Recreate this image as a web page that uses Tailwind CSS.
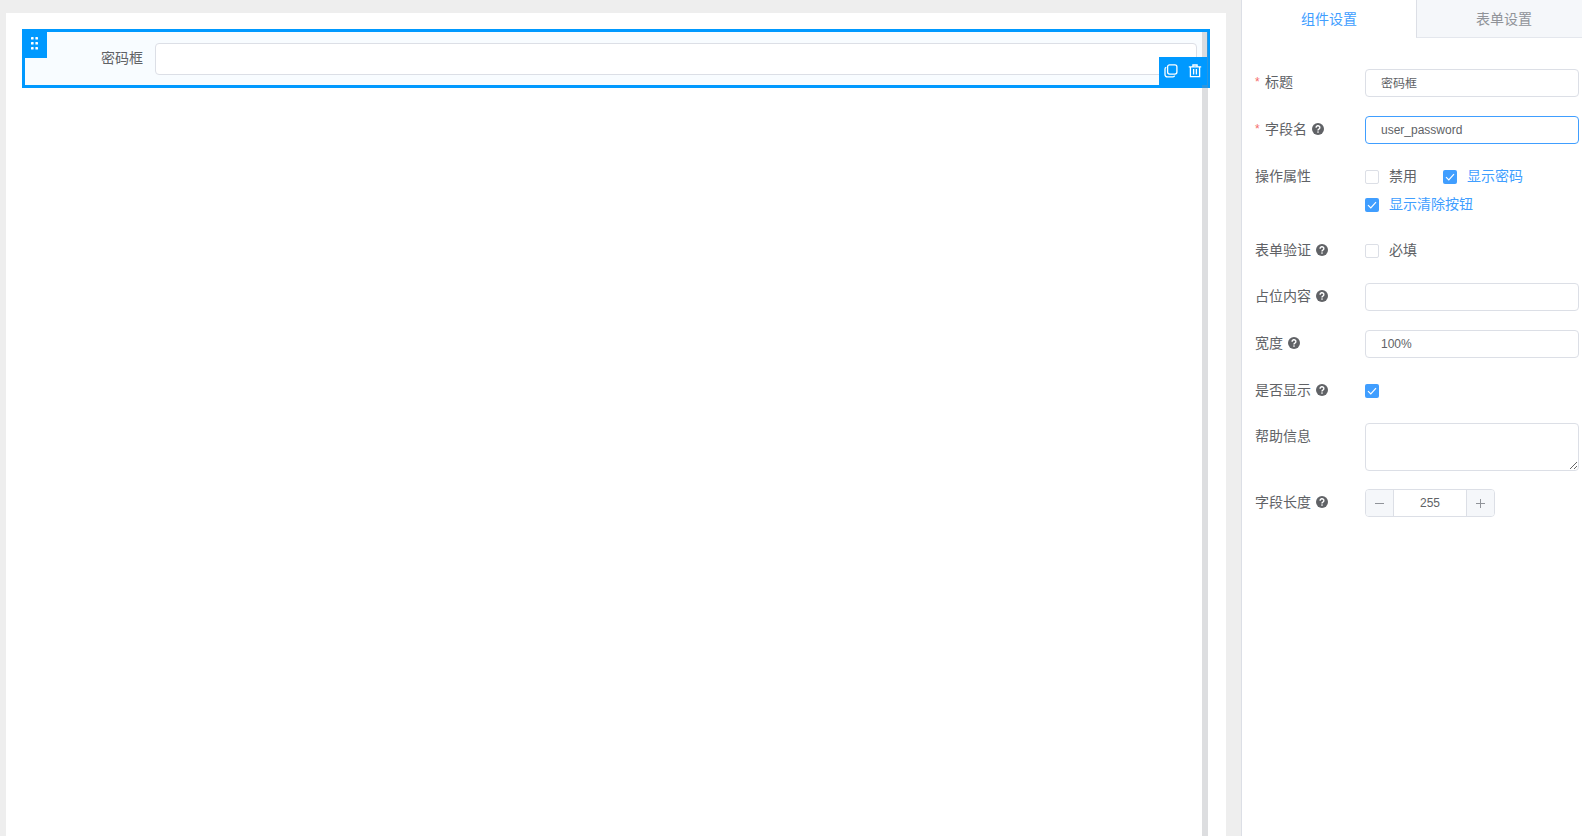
<!DOCTYPE html>
<html lang="zh-CN">
<head>
  <meta charset="UTF-8" />
  <meta name="viewport" content="width=device-width, initial-scale=1.0" />
  <title>表单设计</title>
  <script src="https://cdn.jsdelivr.net/npm/@tailwindcss/browser@4"></script>
</head>
<body class="flex h-screen overflow-hidden bg-[#eeeeee] font-['Liberation_Sans','Noto_Sans_CJK_SC',sans-serif] text-sm text-[#606266]">
  <!-- Shared icon -->
  <svg class="hidden">
    <symbol id="icon-help" viewBox="0 0 12 12">
      <circle cx="6" cy="6" r="6" fill="#606266" />
      <path d="M4.1 4.7A1.9 1.8 0 1 1 6.9 6.1C6.3 6.4 6 6.7 6 7.5" fill="none" stroke="#fff" stroke-width="1.4" />
      <circle cx="6" cy="9.1" r=".8" fill="#fff" />
    </symbol>
  </svg>

  <!-- Canvas -->
  <main class="flex min-w-0 flex-1 pt-[13px] pr-[15px] pl-[6px]">
    <div class="relative min-w-0 flex-1 bg-white p-4">
      <!-- Selected component -->
      <div class="relative flex h-[59px] items-center border-3 border-[#0099ff] bg-[#f8fcff] pr-[10px]">
        <label for="preview-password" class="w-[130px] shrink-0 pr-3 pb-0.5 text-right">密码框</label>
        <input id="preview-password" type="password" class="h-8 min-w-0 flex-1 rounded border border-[#dcdfe6] bg-white px-4 outline-none" />
        <button type="button" aria-label="拖动" class="absolute -top-[3px] -left-[3px] flex h-[29px] w-[25px] items-center justify-center bg-[#0099ff]">
          <svg width="7" height="13" viewBox="0 0 7 13" fill="#fff">
            <rect width="2.6" height="2.6" rx=".6" /><rect x="4.4" width="2.6" height="2.6" rx=".6" />
            <rect y="5" width="2.6" height="2.6" rx=".6" /><rect x="4.4" y="5" width="2.6" height="2.6" rx=".6" />
            <rect y="10" width="2.6" height="2.6" rx=".6" /><rect x="4.4" y="10" width="2.6" height="2.6" rx=".6" />
          </svg>
        </button>
        <div class="absolute right-0 bottom-0 z-20 flex h-7 items-center gap-[10px] bg-[#0099ff] px-[5px]">
          <button type="button" aria-label="复制">
            <svg width="14" height="14" viewBox="0 0 14 14" fill="none" stroke="#fff" stroke-width="1.3">
              <rect x="3.6" y=".8" width="9.3" height="9.3" rx="2" />
              <path d="M2.3 3.4C1.4 3.6 1 4.2 1 5v5.6A2.3 2.3 0 0 0 3.3 12.9H9c.8 0 1.4-.4 1.6-1.2" />
            </svg>
          </button>
          <button type="button" aria-label="删除">
            <svg width="14" height="14" viewBox="0 0 14 14" fill="none" stroke="#fff" stroke-width="1.3">
              <path d="M.8 2.8h12.4M4.9 2.6V1h4.2v1.6M2.4 3v9.7h9.2V3M5.6 5v5.6M8.4 5v5.6" />
            </svg>
          </button>
        </div>
      </div>
      <!-- Scrollbar -->
      <div class="absolute top-[19px] right-[18px] bottom-0 z-10 w-[6px] bg-[#909399]/30"></div>
    </div>
  </main>

  <!-- Settings panel -->
  <aside class="w-[341px] shrink-0 overflow-hidden border-l border-[#dcdfe6] bg-white">
    <nav class="flex h-[38px]">
      <button type="button" class="w-[174px] shrink-0 text-[#409eff]">组件设置</button>
      <button type="button" class="w-[175px] shrink-0 border-b border-l border-b-[#e4e7ed] border-l-[#dcdfe6] bg-[#f5f7fa] text-[#909399]">表单设置</button>
    </nav>

    <form class="flex flex-col gap-[18px] pt-[31px] pr-[3px] pl-[13px]">
      <div class="flex h-[29px]">
        <label for="title" class="flex h-[26px] w-[110px] shrink-0 items-center"><span class="w-[10px] text-xs text-[#f56c6c]">*</span>标题</label>
        <input id="title" type="text" value="密码框" class="h-7 min-w-0 flex-1 rounded border border-[#dcdfe6] px-[15px] pb-0.5 text-xs outline-none" />
      </div>

      <div class="flex h-[29px]">
        <label for="field" class="flex h-[26px] w-[110px] shrink-0 items-center"><span class="w-[10px] text-xs text-[#f56c6c]">*</span>字段名
          <svg class="ml-[5px]" width="12" height="12"><use href="#icon-help" /></svg>
        </label>
        <input id="field" type="text" value="user_password" class="h-7 min-w-0 flex-1 rounded border border-[#409eff] px-[15px] text-xs outline-none" />
      </div>

      <div class="flex">
        <span class="flex h-[26px] w-[110px] shrink-0 items-center">操作属性</span>
        <div class="flex flex-1 flex-wrap gap-x-[26px]">
          <label class="flex h-7 items-center gap-[10px]">
            <input type="checkbox" class="size-[14px] appearance-none rounded-xs border border-[#dcdfe6] bg-white" />
            <span class="pb-0.5">禁用</span>
          </label>
          <label class="flex h-7 items-center gap-[10px] text-[#409eff]">
            <span class="relative flex">
              <input type="checkbox" checked class="size-[14px] appearance-none rounded-xs bg-[#409eff]" />
              <svg class="pointer-events-none absolute inset-0" width="14" height="14" fill="none" stroke="#fff" stroke-width="1.2"><path d="M3 7.2 5.8 10 11 4.2" /></svg>
            </span>
            <span class="pb-0.5">显示密码</span>
          </label>
          <label class="flex h-7 items-center gap-[10px] text-[#409eff]">
            <span class="relative flex">
              <input type="checkbox" checked class="size-[14px] appearance-none rounded-xs bg-[#409eff]" />
              <svg class="pointer-events-none absolute inset-0" width="14" height="14" fill="none" stroke="#fff" stroke-width="1.2"><path d="M3 7.2 5.8 10 11 4.2" /></svg>
            </span>
            <span class="pb-0.5">显示清除按钮</span>
          </label>
        </div>
      </div>

      <div class="flex">
        <span class="flex h-[26px] w-[110px] shrink-0 items-center">表单验证
          <svg class="ml-[5px]" width="12" height="12"><use href="#icon-help" /></svg>
        </span>
        <label class="flex h-7 items-center gap-[10px]">
          <input type="checkbox" class="size-[14px] appearance-none rounded-xs border border-[#dcdfe6] bg-white" />
          <span class="pb-0.5">必填</span>
        </label>
      </div>

      <div class="flex h-[29px]">
        <label for="placeholder" class="flex h-[26px] w-[110px] shrink-0 items-center">占位内容
          <svg class="ml-[5px]" width="12" height="12"><use href="#icon-help" /></svg>
        </label>
        <input id="placeholder" type="text" class="h-7 min-w-0 flex-1 rounded border border-[#dcdfe6] px-[15px] text-xs outline-none" />
      </div>

      <div class="flex h-[29px]">
        <label for="width" class="flex h-[26px] w-[110px] shrink-0 items-center">宽度
          <svg class="ml-[5px]" width="12" height="12"><use href="#icon-help" /></svg>
        </label>
        <input id="width" type="text" value="100%" class="h-7 min-w-0 flex-1 rounded border border-[#dcdfe6] px-[15px] text-xs outline-none" />
      </div>

      <div class="flex">
        <label for="visible" class="flex h-[26px] w-[110px] shrink-0 items-center">是否显示
          <svg class="ml-[5px]" width="12" height="12"><use href="#icon-help" /></svg>
        </label>
        <div class="flex h-7 items-center">
          <span class="relative flex">
            <input id="visible" type="checkbox" checked class="size-[14px] appearance-none rounded-xs bg-[#409eff]" />
            <svg class="pointer-events-none absolute inset-0" width="14" height="14" fill="none" stroke="#fff" stroke-width="1.2"><path d="M3 7.2 5.8 10 11 4.2" /></svg>
          </span>
        </div>
      </div>

      <div class="flex">
        <label for="help" class="flex h-[26px] w-[110px] shrink-0 items-center">帮助信息</label>
        <textarea id="help" class="h-12 min-w-0 flex-1 resize-y rounded border border-[#dcdfe6] px-[15px] py-[5px] text-xs outline-none"></textarea>
      </div>

      <div class="flex">
        <label for="length" class="flex h-[26px] w-[110px] shrink-0 items-center">字段长度
          <svg class="ml-[5px]" width="12" height="12"><use href="#icon-help" /></svg>
        </label>
        <div class="flex h-7 w-[130px] overflow-hidden rounded border border-[#dcdfe6]">
          <button type="button" aria-label="减少" class="flex w-7 items-center justify-center border-r border-[#dcdfe6] bg-[#f5f7fa]">
            <svg width="9" height="9" stroke="#909399"><path d="M0 4.5h9" /></svg>
          </button>
          <input id="length" type="text" value="255" class="min-w-0 flex-1 text-center text-xs outline-none" />
          <button type="button" aria-label="增加" class="flex w-7 items-center justify-center border-l border-[#dcdfe6] bg-[#f5f7fa]">
            <svg width="9" height="9" stroke="#909399"><path d="M0 4.5h9M4.5 0v9" /></svg>
          </button>
        </div>
      </div>
    </form>
  </aside>
</body>
</html>
